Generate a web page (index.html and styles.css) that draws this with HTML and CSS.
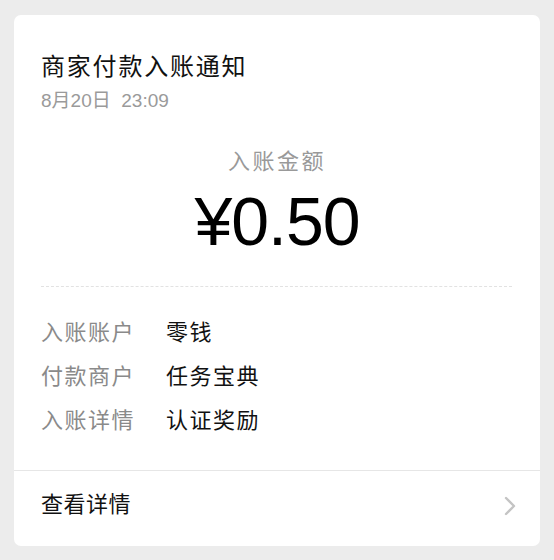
FILE: index.html
```html
<!DOCTYPE html>
<html lang="zh-CN">
<head>
    <meta charset="UTF-8">
    <meta name="viewport" content="width=device-width, initial-scale=1.0">
    <title>商家付款入账通知</title>
    <link rel="stylesheet" href="styles.css">
</head>
<body>
    <div class="card">
        <!-- Header -->
        <div class="card-head">
            <h1 class="title">商家付款入账通知</h1>
            <div class="date">8月20日&nbsp;&nbsp;23:09</div>
        </div>

        <!-- Amount -->
        <div class="amount-box">
            <div class="amount-label">入账金额</div>
            <div class="amount">¥0.50</div>
        </div>

        <div class="dashed"></div>

        <!-- Details -->
        <div class="detail-list">
            <div class="detail-row">
                <span class="detail-key">入账账户</span>
                <span class="detail-val">零钱</span>
            </div>
            <div class="detail-row">
                <span class="detail-key">付款商户</span>
                <span class="detail-val">任务宝典</span>
            </div>
            <div class="detail-row">
                <span class="detail-key">入账详情</span>
                <span class="detail-val">认证奖励</span>
            </div>
        </div>

        <!-- Footer link -->
        <div class="card-foot">
            <span class="foot-text">查看详情</span>
            <svg class="chevron" width="12" height="20" viewBox="0 0 12 20">
                <path d="M2 2 L10 10 L2 18" fill="none" stroke="#c4c4c4" stroke-width="2.4" stroke-linecap="round" stroke-linejoin="round"/>
            </svg>
        </div>
    </div>
</body>
</html>
```

FILE: styles.css
```css
/* Global Styles */
html, body {
    margin: 0;
    padding: 0;
    background-color: #ececec;
    font-family: "Liberation Sans", "Noto Sans CJK SC", sans-serif;
}

body {
    padding: 15px 14px 14px 14px;
}

/* Card */
.card {
    background-color: #fff;
    border-radius: 7px;
    overflow: hidden;
}

.card-head {
    padding: 36px 27px 0 27px;
}

.title {
    margin: 0;
    font-size: 24px;
    font-weight: normal;
    color: #111;
    letter-spacing: 1.8px;
    line-height: 32px;
}

.date {
    font-size: 19px;
    color: #9a9a9a;
    line-height: 22px;
    margin-top: 7px;
}

/* Amount */
.amount-box {
    text-align: center;
    padding-top: 35px;
}

.amount-label {
    font-size: 22px;
    color: #999;
    letter-spacing: 2.5px;
    line-height: 30px;
}

.amount {
    margin-top: 4px;
    font-size: 68px;
    color: #000;
    line-height: 80px;
    letter-spacing: -1px;
}

.dashed {
    margin: 25px 28px 0 27px;
    border-top: 1px dashed #e2e2e2;
}

/* Details */
.detail-list {
    padding: 24px 27px 27px 27px;
}

.detail-row {
    display: flex;
    line-height: 44px;
    font-size: 22px;
    letter-spacing: 1.5px;
}

.detail-key {
    width: 125px;
    color: #8a8a8a;
}

.detail-val {
    color: #111;
}

/* Footer */
.card-foot {
    border-top: 1px solid #e6e6e6;
    display: flex;
    justify-content: space-between;
    align-items: flex-start;
    height: 76px;
    box-sizing: border-box;
    padding: 21px 24px 0 27px;
    font-size: 22px;
    letter-spacing: 0.5px;
    color: #111;
}

.foot-text {
    line-height: 26px;
}

.chevron {
    display: block;
    margin-top: 4px;
}
```
